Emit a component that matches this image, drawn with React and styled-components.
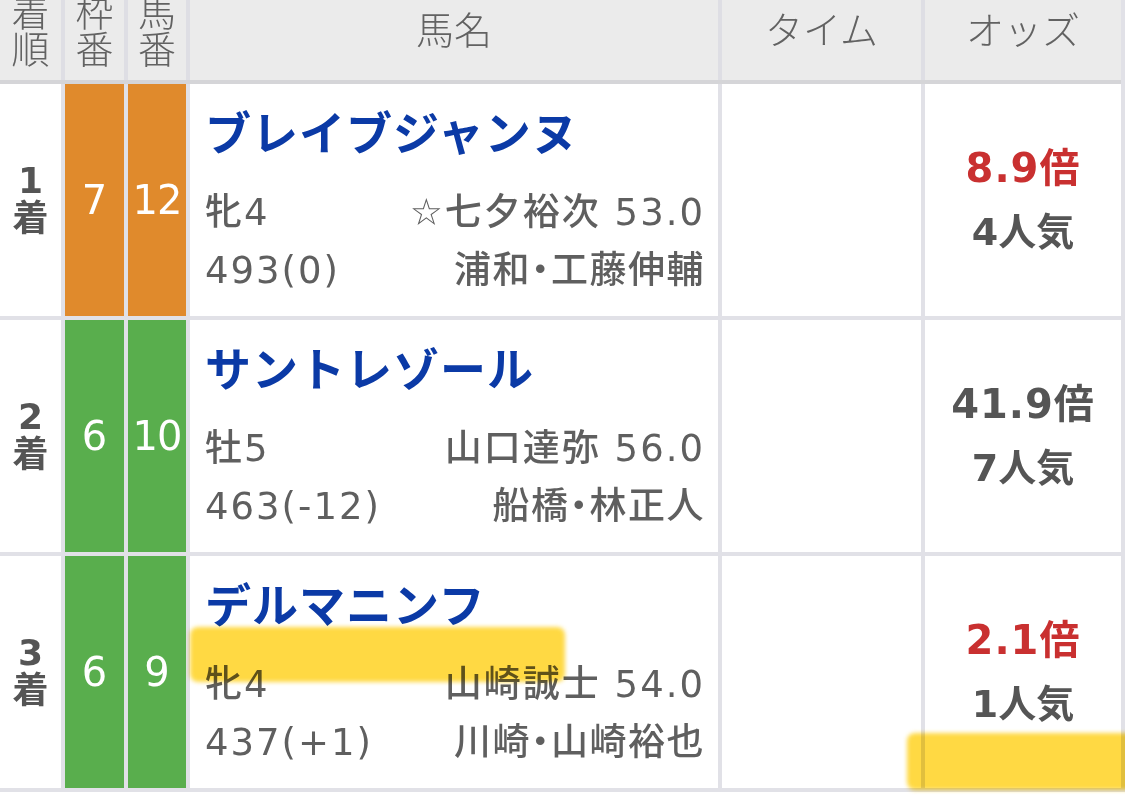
import styled, { createGlobalStyle } from "styled-components";

const GlobalStyle = createGlobalStyle`
  html, body {
    margin: 0;
    padding: 0;
    background: #fff;
  }
  body {
    font-family: "DejaVu Sans", "Noto Sans CJK JP", sans-serif;
  }
`;

// 列幅
const COLS = "61px 59px 58px 528px 199px 196px";

const Page = styled.div`
  width: 1125px;
  height: 796px;
  overflow: hidden;
  background: #fff;
`;

const Table = styled.div`
  margin-top: -25px;
  background: #e1e1e7;
  padding-right: 4px;
`;

const HeaderRow = styled.div`
  display: grid;
  grid-template-columns: ${COLS};
  column-gap: 4px;
  background: #dedee4;
  border-bottom: 4px solid #d5d5d8;
`;

const HeaderCell = styled.div`
  height: 105px;
  background: #ebebeb;
  display: flex;
  align-items: center;
  justify-content: center;
  text-align: center;
  color: #626262;
  font-family: "Noto Sans CJK JP", sans-serif;
  font-size: 38px;
  line-height: 37px;
  font-weight: 300;
`;

const Body = styled.div`
  display: flex;
  flex-direction: column;
  gap: 4px;
  padding-bottom: 4px;
`;

const Row = styled.div`
  position: relative;
  display: grid;
  grid-template-columns: ${COLS};
  column-gap: 4px;
  height: 232px;
`;

const RankCell = styled.div`
  background: #fff;
  display: flex;
  align-items: center;
  justify-content: center;
  text-align: center;
  color: #555;
  font-size: 36px;
  line-height: 38px;
  font-weight: 600;
`;

const NumCell = styled.div`
  background: ${(p) => p.$color};
  display: flex;
  align-items: center;
  justify-content: center;
  color: #fff;
  font-size: 40px;
  letter-spacing: ${(p) => (p.$tight ? "-1px" : "0")};
`;

const NameCell = styled.div`
  background: #fff;
  display: flex;
  flex-direction: column;
  justify-content: center;
  padding: 0 13px 0 15px;
`;

const HorseName = styled.div`
  font-family: "Noto Sans CJK JP", sans-serif;
  font-size: 46px;
  font-weight: 700;
  letter-spacing: 1px;
  line-height: 60px;
  color: #0b3aa6;
  margin-bottom: 24px;
`;

const SubLine = styled.div`
  display: flex;
  justify-content: space-between;
  font-size: 37px;
  line-height: 58px;
  letter-spacing: 2px;
  font-weight: 500;
  color: #5f5f5f;
`;

// 所属・調教師（中黒を詰める）
const Trainer = styled.span`
  font-feature-settings: "palt";
  letter-spacing: 1.5px;
`;

const BlankCell = styled.div`
  background: #fff;
`;

const OddsCell = styled.div`
  background: #fff;
  display: flex;
  flex-direction: column;
  align-items: center;
  justify-content: center;
  text-align: center;
`;

const Odds = styled.div`
  font-size: 40px;
  line-height: 64px;
  font-weight: 600;
  letter-spacing: 1px;
  color: ${(p) => (p.$hot ? "#c93030" : "#555")};
`;

const Popular = styled.div`
  font-size: 38px;
  line-height: 64px;
  font-weight: 600;
  color: #555;
`;

// 蛍光ペンのマーカー
const Marker = styled.div`
  position: absolute;
  left: ${(p) => p.$left}px;
  top: ${(p) => p.$top}px;
  width: ${(p) => p.$width}px;
  height: ${(p) => p.$height}px;
  background: #ffd633;
  border-radius: 8px;
  filter: blur(2px);
  mix-blend-mode: multiply;
  opacity: 0.92;
`;

const WAKU = {
  6: "#59ae4d",
  7: "#e08a2c",
};

const results = [
  {
    rank: 1,
    waku: 7,
    umaban: 12,
    name: "ブレイブジャンヌ",
    sex: "牝4",
    jockey: "☆七夕裕次 53.0",
    weight: "493(0)",
    trainer: "浦和・工藤伸輔",
    odds: "8.9倍",
    pop: "4人気",
    hot: true,
  },
  {
    rank: 2,
    waku: 6,
    umaban: 10,
    name: "サントレゾール",
    sex: "牡5",
    jockey: "山口達弥 56.0",
    weight: "463(-12)",
    trainer: "船橋・林正人",
    odds: "41.9倍",
    pop: "7人気",
    hot: false,
  },
  {
    rank: 3,
    waku: 6,
    umaban: 9,
    name: "デルマニンフ",
    sex: "牝4",
    jockey: "山崎誠士 54.0",
    weight: "437(+1)",
    trainer: "川崎・山崎裕也",
    odds: "2.1倍",
    pop: "1人気",
    hot: true,
    marked: true,
  },
];

export default function App() {
  return (
    <Page>
      <GlobalStyle />
      <Table>
        <HeaderRow>
          <HeaderCell>
            着<br />順
          </HeaderCell>
          <HeaderCell>
            枠<br />番
          </HeaderCell>
          <HeaderCell>
            馬<br />番
          </HeaderCell>
          <HeaderCell>馬名</HeaderCell>
          <HeaderCell>タイム</HeaderCell>
          <HeaderCell>オッズ</HeaderCell>
        </HeaderRow>
        <Body>
          {results.map((r) => (
            <Row key={r.rank}>
              <RankCell>
                {r.rank}
                <br />着
              </RankCell>
              <NumCell $color={WAKU[r.waku]}>{r.waku}</NumCell>
              <NumCell $color={WAKU[r.waku]} $tight={r.umaban > 9}>
                {r.umaban}
              </NumCell>
              <NameCell>
                <HorseName>{r.name}</HorseName>
                <SubLine>
                  <span>{r.sex}</span>
                  <span>{r.jockey}</span>
                </SubLine>
                <SubLine>
                  <span>{r.weight}</span>
                  <Trainer>{r.trainer}</Trainer>
                </SubLine>
              </NameCell>
              <BlankCell />
              <OddsCell>
                <Odds $hot={r.hot}>{r.odds}</Odds>
                <Popular>{r.pop}</Popular>
              </OddsCell>
              {r.marked && (
                <>
                  <Marker $left={190} $top={71} $width={375} $height={55} />
                  <Marker $left={907} $top={177} $width={240} $height={57} />
                </>
              )}
            </Row>
          ))}
        </Body>
      </Table>
    </Page>
  );
}
